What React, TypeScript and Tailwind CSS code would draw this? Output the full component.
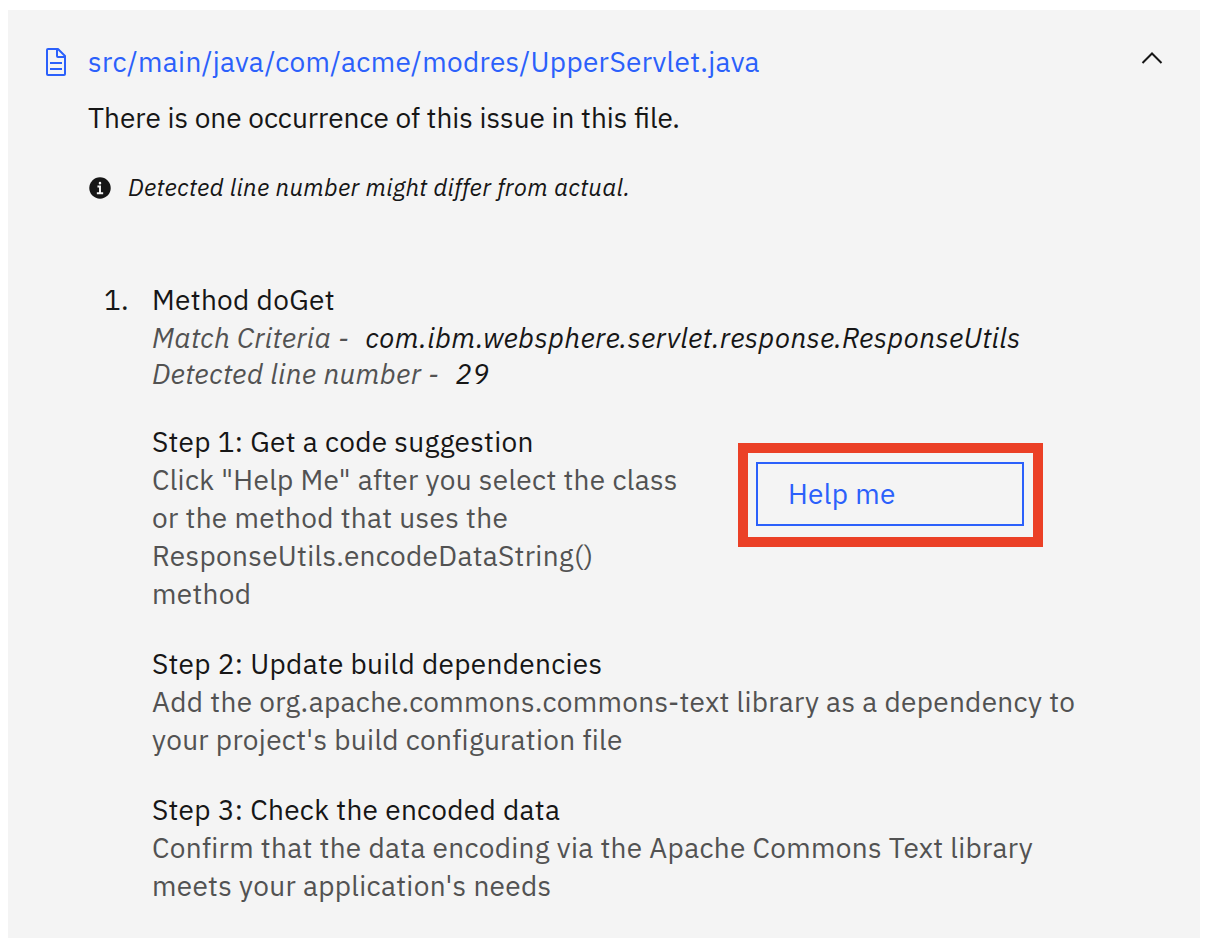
const steps = [
  {
    title: "Step 2: Update build dependencies",
    lines: [
      "Add the org.apache.commons.commons-text library as a dependency to",
      "your project's build configuration file",
    ],
  },
  {
    title: "Step 3: Check the encoded data",
    lines: [
      "Confirm that the data encoding via the Apache Commons Text library",
      "meets your application's needs",
    ],
  },
];

function Step({ title, lines }: { title: string; lines: string[] }) {
  return (
    <section className="text-[28px] leading-[38px] tracking-[0.31px] whitespace-nowrap">
      <h3>{title}</h3>
      {lines.map((line) => (
        <p key={line} className="text-[#525252]">{line}</p>
      ))}
    </section>
  );
}

function DocumentIcon() {
  return (
    <svg className="size-8 shrink-0" viewBox="0 0 32 32" fill="#2b60fb">
      <path d="M25.7 9.3l-7-7A.91.91 0 0 0 18 2H8a2 2 0 0 0-2 2v24a2 2 0 0 0 2 2h16a2 2 0 0 0 2-2V10a.91.91 0 0 0-.3-.7zM18 4.4l5.6 5.6H18zM24 28H8V4h8v6a2 2 0 0 0 2 2h6z" />
      <path d="M10 22h12v2H10zM10 16h12v2H10z" />
    </svg>
  );
}

function InfoIcon() {
  return (
    <svg className="mt-[2px] size-6 shrink-0" viewBox="0 0 32 32">
      <circle cx="16" cy="16" r="14.3" fill="#161616" />
      <path d="M16 7.800a1.700 1.700 0 1 1 0 3.400a1.700 1.700 0 0 1 0-3.400zM20.200 24.300h-8.400v-2.600h2.900v-6.300H12.600v-2.600h4.700v8.900h2.900z" fill="#f4f4f4" />
    </svg>
  );
}

export default function App() {
  return (
    <div className="h-[950px] w-[1206px] overflow-hidden bg-white pt-[10px] pl-2 font-['IBM_Plex_Sans','Open_Sans',sans-serif] text-[#161616]">
      <main className="h-[928px] w-[1192px] bg-[#f4f4f4] pt-[33px]">
        <header className="flex h-[38px] items-center pr-[36px] pl-8">
          <DocumentIcon />
          <a className="ml-4 text-[28px] leading-[38px] tracking-[0.31px] text-[#2b60fb]">
            src/main/java/com/acme/modres/UpperServlet.java
          </a>
          <svg className="mb-2 ml-auto size-6" viewBox="0 0 24 24" fill="none" stroke="#161616" strokeWidth="2">
            <path d="M2.5 17l9.5-9.5L21.500 17" />
          </svg>
        </header>

        <p className="mt-[18px] ml-20 text-[28px] leading-[38px]">
          There is one occurrence of this issue in this file.
        </p>
        <div className="mt-8 ml-20 flex h-[36px] items-center gap-4">
          <InfoIcon />
          <p className="text-[24px] leading-8 tracking-[0.32px] italic">Detected line number might differ from actual.</p>
        </div>

        <div className="mt-[76px] ml-[96px] flex">
          <span className="w-12 text-[28px] leading-[38px] tracking-[0.32px]">1.</span>
          <div>
            <h2 className="text-[28px] leading-[38px] tracking-[0.32px]">Method doGet</h2>
            <div className="mt-px text-[28px] leading-[36px] tracking-[0.32px] whitespace-nowrap italic">
              <p className="text-[#525252]">
                Match Criteria - <span className="ml-[9px] text-[#161616]">com.ibm.websphere.servlet.response.ResponseUtils</span>
              </p>
              <p className="text-[#525252]">
                Detected line number - <span className="ml-[9px] text-[#161616]">29</span>
              </p>
            </div>

            <div className="mt-[31px] flex items-start">
              <div className="w-[586px]">
                <Step
                  title="Step 1: Get a code suggestion"
                  lines={[
                    'Click "Help Me" after you select the class',
                    "or the method that uses the",
                    "ResponseUtils.encodeDataString()",
                    "method",
                  ]}
                />
              </div>
              <div className="mt-5 h-[104px] w-[305px] border-[10px] border-[#eb4026] pt-[9px] pl-2">
                <button className="h-16 w-[268px] border-2 border-[#2b60fb] pl-[30px] text-left text-[28px] leading-[36px] tracking-[0.32px] text-[#2b60fb]">
                  Help me
                </button>
              </div>
            </div>
            <div className="mt-8 flex flex-col gap-8">
              {steps.map((step) => (
                <Step key={step.title} {...step} />
              ))}
            </div>
          </div>
        </div>
      </main>
    </div>
  );
}
